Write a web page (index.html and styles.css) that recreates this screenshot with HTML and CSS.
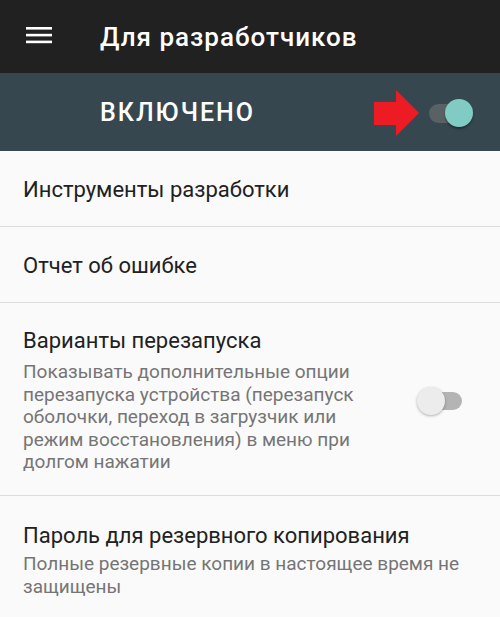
FILE: index.html
```html
<!DOCTYPE html>
<html lang="ru">
<head>
<meta charset="utf-8">
<link rel="stylesheet" href="styles.css">
</head>
<body>
<div class="appbar">
  <svg class="menu" width="26" height="17" viewBox="0 0 26 17">
    <rect x="0" y="0" width="26" height="2.6" fill="#fff"/>
    <rect x="0" y="6.8" width="26" height="2.6" fill="#fff"/>
    <rect x="0" y="13.6" width="26" height="2.6" fill="#fff"/>
  </svg>
  <div class="title">Для разработчиков</div>
</div>
<div class="master">
  <div class="master-label">ВКЛЮЧЕНО</div>
  <svg class="arrow" width="46" height="46" viewBox="0 0 46 46">
    <polygon points="0,12 22,12 22,0 45,23 22,46 22,35 0,35" fill="#ed1c24"/>
  </svg>
  <div class="switch on">
    <div class="track"></div>
    <div class="thumb"></div>
  </div>
</div>
<div class="list">
  <div class="item single">
    <div class="item-title">Инструменты разработки</div>
  </div>
  <div class="item single">
    <div class="item-title">Отчет об ошибке</div>
  </div>
  <div class="item with-switch">
    <div class="item-text narrow">
      <div class="item-title">Варианты перезапуска</div>
      <div class="item-sub">Показывать дополнительные опции перезапуска устройства (перезапуск оболочки, переход в загрузчик или режим восстановления) в меню при долгом нажатии</div>
    </div>
    <div class="switch off">
      <div class="track"></div>
      <div class="thumb"></div>
    </div>
  </div>
  <div class="item last">
    <div class="item-text">
      <div class="item-title">Пароль для резервного копирования</div>
      <div class="item-sub tight">Полные резервные копии в настоящее время не защищены</div>
    </div>
  </div>
</div>
</body>
</html>
```
FILE: styles.css
```css
html, body {
  margin: 0;
  padding: 0;
}
body {
  width: 500px;
  height: 617px;
  overflow: hidden;
  background: #fafafa;
  font-family: Roboto, "Noto Sans", sans-serif;
}
.appbar {
  height: 73px;
  background: #212121;
  display: flex;
  align-items: center;
}
.menu {
  margin-left: 26px;
  margin-right: 48px;
  margin-top: -2px;
  display: block;
}
.title {
  color: #fff;
  font-size: 26px;
  font-weight: 500;
  letter-spacing: 1px;
  line-height: 30px;
}
.master {
  height: 78px;
  background: #37474f;
  display: flex;
  align-items: center;
  padding-left: 100px;
  padding-right: 27px;
}
.master-label {
  flex: 1;
  color: #fff;
  font-size: 25px;
  font-weight: 500;
  letter-spacing: 2px;
  line-height: 28px;
  margin-top: 2px;
}
.arrow {
  display: block;
  margin-right: 9px;
  margin-top: 2px;
}
.switch {
  position: relative;
  width: 44px;
  height: 30px;
}
.switch .track {
  position: absolute;
  top: 6px;
  height: 19px;
  border-radius: 10px;
}
.switch .thumb {
  position: absolute;
  top: 1px;
  width: 28px;
  height: 28px;
  border-radius: 50%;
}
.switch.on {
  margin-top: 2px;
}
.switch.on .track {
  left: 0;
  width: 36px;
  background: #5a6165;
}
.switch.on .thumb {
  right: 0;
  background: #80cbc4;
  box-shadow: 0 2px 2px rgba(0,0,0,0.35);
}
.switch.off {
  width: 45px;
}
.switch.off .track {
  left: 3px;
  width: 42px;
  top: 6px;
  height: 18px;
  background: #b4b4b4;
}
.switch.off .thumb {
  left: 0;
  background: #ececec;
  box-shadow: 0 1px 3px rgba(0,0,0,0.3);
}
.item {
  padding-left: 23px;
  padding-right: 23px;
  border-bottom: 1px solid #dcdcdc;
}
.item.single {
  padding-top: 26px;
  padding-bottom: 23px;
}
.item.with-switch {
  display: flex;
  align-items: center;
  padding-right: 0;
  padding-top: 25px;
  padding-bottom: 21px;
}
.item.last {
  border-bottom: none;
  padding-top: 27px;
}
.item-text {
  flex: 1;
}
.item-text.narrow {
  flex: 0 0 360px;
  margin-right: 34px;
}
.item-title {
  color: #212121;
  font-size: 22px;
  line-height: 26px;
}
.item-sub {
  color: #757575;
  font-size: 19px;
  line-height: 22.5px;
  margin-top: 7px;
}
.item-sub.tight {
  margin-top: 3px;
  line-height: 23px;
}
```
